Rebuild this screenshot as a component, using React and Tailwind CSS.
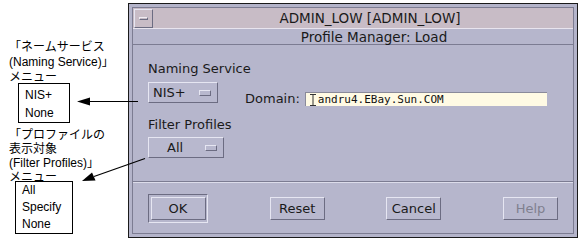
const ui = { fontFamily: '"DejaVu Sans", sans-serif' };
const jp = { fontFamily: '"Liberation Sans", "Noto Sans CJK JP", sans-serif' };

const Bevel = ({ className = '', children }) => (
  <div
    className={`border border-t-[#e6e6f2] border-l-[#e6e6f2] border-b-[#6c6c82] border-r-[#6c6c82] bg-[#b8b8ce] ${className}`}
  >
    {children}
  </div>
);

const OptionMenu = ({ label, className = '' }) => (
  <Bevel className={`h-[21px] flex items-center justify-between pr-[6px] ${className}`}>
    <span className="text-[13px] leading-[16px] text-[#1a1a1a]">{label}</span>
    <Bevel className="w-[12px] h-[6px]" />
  </Bevel>
);

const PushButton = ({ label, disabled }) => (
  <Bevel className="w-[55px] h-[23px] flex items-center justify-center">
    <span className={`text-[13px] leading-[16px] ${disabled ? 'text-[#80808e]' : 'text-[#1a1a1a]'}`}>
      {label}
    </span>
  </Bevel>
);

const Window = () => (
  <div className="mt-[3px] w-[450px] h-[235px] border border-[#1a1a1a] bg-[#b4b4ca] p-[3px] flex flex-col" style={ui}>
    <div className="flex-1 flex flex-col border border-[#7c7c92]">
      {/* title bar */}
      <div className="h-[21px] flex items-center bg-[#c8bcc6] border-b border-b-[#e8e4ee]">
        <Bevel className="ml-[1px] w-[19px] h-[19px] flex items-center justify-center bg-[#c8bcc6]">
          <div className="w-[9px] h-[3px] border border-t-[#f0ecf2] border-l-[#f0ecf2] border-b-[#6c6c82] border-r-[#6c6c82]" />
        </Bevel>
        <div className="flex-1 text-center text-[13.5px] leading-[16px] text-[#1a1a1a] pl-[14px]">
          ADMIN_LOW [ADMIN_LOW]
        </div>
      </div>

      {/* dialog header */}
      <div className="h-[16px] flex items-center justify-center pl-[42px] border-b border-b-[#7c7c92] bg-[#b6b6cc]">
        <span className="text-[13.5px] leading-[16px] text-[#1a1a1a]">Profile Manager: Load</span>
      </div>

      {/* body */}
      <div className="flex-1 flex flex-col bg-[#b6b6cc]">
        <div className="pl-[15px]">
          <div className="mt-[16px] text-[13px] leading-[16px] text-[#1a1a1a]">Naming Service</div>
          <div className="mt-[5px] flex items-start h-[24px]">
            <OptionMenu label="NIS+" className="w-[70px] pl-[4px]" />
            <span className="ml-[27px] mt-[9px] text-[13px] leading-[16px] text-[#1a1a1a]">Domain:</span>
            <div className="ml-[5px] mt-[10px] w-[242px] h-[14px] bg-[#fffae4] border-t border-l border-[#8a8a9a] flex items-center pl-[4px]">
              <svg width="6" height="12" viewBox="0 0 6 12" className="mr-[2px]">
                <path d="M0 0.5h6M0 11.5h6M3 0.5v11" stroke="#333" strokeWidth="1" fill="none" />
              </svg>
              <span className="text-[11px] leading-[13px] text-[#111]" style={{ fontFamily: '"DejaVu Sans Mono", monospace' }}>
                andru4.EBay.Sun.COM
              </span>
            </div>
          </div>
          <div className="mt-[11px] text-[13px] leading-[16px] text-[#1a1a1a]">Filter Profiles</div>
          <OptionMenu label="All" className="mt-[4px] w-[76px] pl-[18px]" />
        </div>

        <div className="mt-[23px] border-t border-t-[#7c7c92] border-b border-b-[#dcdcea]" />

        <div className="mt-[11px] pl-[15px] pr-[15px] flex items-center justify-between">
          <div className="w-[60px] h-[29px] border border-t-[#6c6c82] border-l-[#6c6c82] border-b-[#e6e6f2] border-r-[#e6e6f2] flex items-center justify-center">
            <PushButton label="OK" />
          </div>
          <PushButton label="Reset" />
          <PushButton label="Cancel" />
          <PushButton label="Help" disabled />
        </div>
      </div>
    </div>
  </div>
);

const Annotations = () => (
  <div className="w-[128px] text-[12px] leading-[15px] text-black" style={jp}>
    <div className="pt-[40px] pl-[9px]">
      <div>「ネームサービス</div>
      <div>(Naming Service)」</div>
      <div>メニュー</div>
    </div>
    <div className="ml-[18px] mt-[-2px] w-[52px] border border-black pl-[6px] pt-[2px] leading-[18px]">
      <div>NIS+</div>
      <div>None</div>
    </div>
    <div className="pl-[9px] mt-[5px] leading-[14px]">
      <div>「プロファイルの</div>
      <div>表示対象</div>
      <div>(Filter Profiles)」</div>
      <div>メニュー</div>
    </div>
    <div className="ml-[15px] mt-[-3px] w-[58px] border border-black pl-[6px] leading-[17px]">
      <div>All</div>
      <div>Specify</div>
      <div>None</div>
    </div>
  </div>
);

export default function App() {
  return (
    <div className="relative w-[582px] h-[240px] bg-white overflow-hidden">
      <div className="flex">
        <Annotations />
        <Window />
      </div>
      {/* callout arrows */}
      <svg className="absolute top-0 left-0 pointer-events-none" width="582" height="240">
        <line x1="88" y1="101.5" x2="138" y2="101.5" stroke="#000" strokeWidth="1.2" />
        <polygon points="77,101.5 90,97.5 90,105.5" fill="#000" />
        <line x1="94" y1="176.5" x2="145" y2="158.5" stroke="#000" strokeWidth="1.2" />
        <polygon points="82,181 92,172.5 95.5,180.5" fill="#000" />
      </svg>
    </div>
  );
}
